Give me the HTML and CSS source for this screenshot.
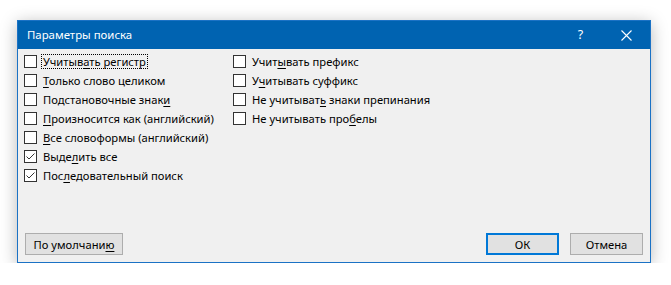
FILE: index.html
```html
<!DOCTYPE html>
<html lang="ru">
<head>
<meta charset="utf-8">
<title>Параметры поиска</title>
<link rel="stylesheet" href="styles.css">
</head>
<body>
<div class="dialog">
  <div class="titlebar">
    <span class="title">Параметры поиска</span>
    <span class="tb-btn help">?</span>
    <span class="tb-btn close">
      <svg width="11" height="11" viewBox="0 0 11 11"><path d="M0.5 0.5 L10.5 10.5 M10.5 0.5 L0.5 10.5" stroke="#fff" stroke-width="1.1" fill="none"/></svg>
    </span>
  </div>
  <div class="content">
    <div class="options">
      <div class="col col-left">
        <div class="opt"><span class="box"></span><span class="lbl focus">Учитыв<u>а</u>ть регистр</span></div>
        <div class="opt"><span class="box"></span><span class="lbl"><u>Т</u>олько слово целиком</span></div>
        <div class="opt"><span class="box"></span><span class="lbl">Подстановочные знак<u>и</u></span></div>
        <div class="opt"><span class="box"></span><span class="lbl"><u>П</u>роизносится как (английский)</span></div>
        <div class="opt"><span class="box"></span><span class="lbl"><u>В</u>се словоформы (английский)</span></div>
        <div class="opt"><span class="box checked"><svg width="11" height="11" viewBox="0 0 11 11"><path d="M1.5 5.5 L4 8 L9.5 2.5" stroke="#333" stroke-width="1" fill="none"/></svg></span><span class="lbl">Выде<u>л</u>ить все</span></div>
        <div class="opt"><span class="box checked"><svg width="11" height="11" viewBox="0 0 11 11"><path d="M1.5 5.5 L4 8 L9.5 2.5" stroke="#333" stroke-width="1" fill="none"/></svg></span><span class="lbl">Пос<u>л</u>едовательный поиск</span></div>
      </div>
      <div class="col">
        <div class="opt"><span class="box"></span><span class="lbl">Учит<u>ы</u>вать префикс</span></div>
        <div class="opt"><span class="box"></span><span class="lbl">У<u>ч</u>итывать суффикс</span></div>
        <div class="opt"><span class="box"></span><span class="lbl">Не учитыват<u>ь</u> знаки препинания</span></div>
        <div class="opt"><span class="box"></span><span class="lbl">Не учитывать про<u>б</u>елы</span></div>
      </div>
    </div>
    <div class="buttons">
      <button class="btn btn-reset">По умолчани<u>ю</u></button>
      <div class="spacer"></div>
      <button class="btn btn-default">ОК</button>
      <button class="btn">Отмена</button>
    </div>
  </div>
</div>
</body>
</html>
```

FILE: styles.css
```css
html, body {
  margin: 0;
  padding: 0;
  background: #ffffff;
}
body {
  font-family: "Noto Sans", "Open Sans", sans-serif;
  font-size: 11.2px;
  color: #000;
}
.dialog {
  margin: 20px 0 0 17px;
  width: 634px;
  height: 243px;
  box-sizing: border-box;
  border: 1px solid #1b72c5;
  background: #f0f0f0;
  display: flex;
  flex-direction: column;
  box-shadow: 0 3px 16px rgba(0, 0, 0, 0.28);
}
.titlebar {
  height: 28px;
  background: #0063b1;
  color: #fff;
  display: flex;
  align-items: center;
  padding-left: 9px;
}
.title {
  flex: 1;
  font-size: 11.4px;
  padding-bottom: 2px;
}
.tb-btn {
  height: 28px;
  display: flex;
  align-items: center;
  justify-content: center;
}
.help {
  width: 45px;
  font-size: 12.5px;
  padding-bottom: 2px;
  box-sizing: border-box;
}
.close {
  width: 47px;
}
.content {
  flex: 1;
  display: flex;
  flex-direction: column;
  padding: 3px 7px 7px 6px;
}
.options {
  flex: 1;
  display: flex;
}
.col-left {
  width: 209px;
}
.opt {
  height: 19px;
  display: flex;
  align-items: center;
}
.box {
  width: 13px;
  height: 13px;
  box-sizing: border-box;
  border: 1px solid #333;
  background: #fff;
  display: flex;
  align-items: center;
  justify-content: center;
  flex: none;
}
.lbl {
  margin-left: 5px;
  padding: 0 1px;
  line-height: 13px;
  white-space: nowrap;
}
.focus {
  outline: 1px dotted #000;
}
.buttons {
  display: flex;
  align-items: flex-end;
  gap: 11px;
}
.spacer {
  flex: 1;
}
.btn {
  height: 22px;
  width: 73px;
  box-sizing: border-box;
  font: inherit;
  color: #000;
  background: #e1e1e1;
  border: 1px solid #adadad;
  padding: 0;
  margin: 0;
}
.btn-reset {
  width: 98px;
  margin-left: 1px;
}
.btn-default {
  border: 2px solid #0078d7;
}
u {
  text-decoration-thickness: 1px;
  text-underline-offset: 2px;
}
```
